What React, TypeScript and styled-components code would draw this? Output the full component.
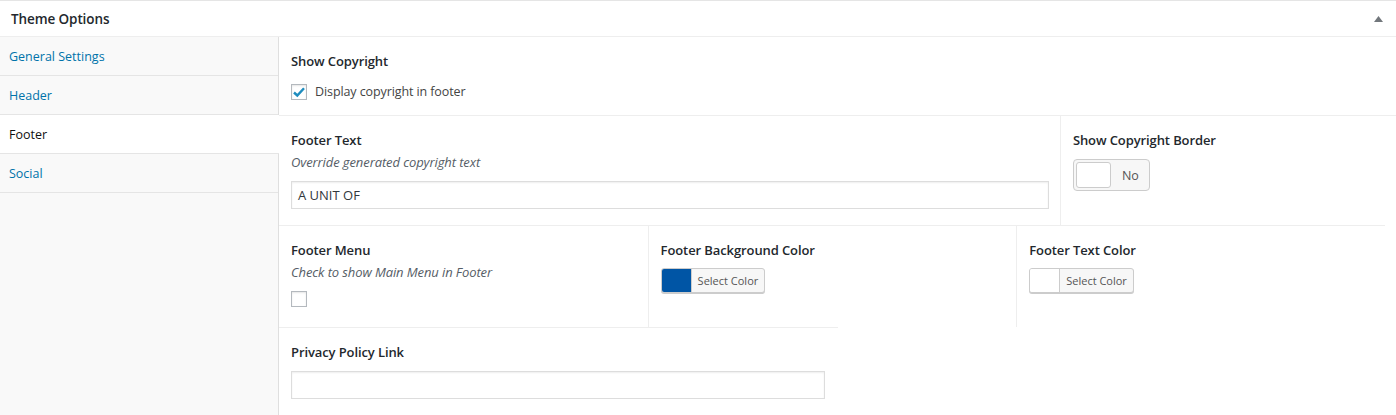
import React from "react";
import styled, { createGlobalStyle } from "styled-components";

const Global = createGlobalStyle`
  html, body { margin: 0; padding: 0; background: #fff; }
  body { font-family: "Segoe UI", "Open Sans", "Noto Sans", sans-serif; font-size: 13px; color: #444; }
  * { box-sizing: border-box; }
`;

const Box = styled.div`
  width: 1396px;
  border-top: 1px solid #e5e5e5;
  background: #fff;
`;

const Head = styled.div`
  height: 36px;
  display: flex;
  align-items: center;
  justify-content: space-between;
  padding: 0 13px 0 11px;
  border-bottom: 1px solid #eeeeee;
`;

const Title = styled.h2`
  margin: 0;
  font-size: 13.5px;
  font-weight: 600;
  color: #23282d;
  letter-spacing: -0.1px;
`;

const Body = styled.div`
  display: flex;
  min-height: 378px;
`;

const Side = styled.ul`
  list-style: none;
  margin: 0;
  padding: 0;
  width: 279px;
  flex: none;
  background: #f9f9f9;
  border-right: 1px solid #dfdfdf;
`;

const Tab = styled.li<{ $active?: boolean }>`
  height: 39px;
  display: flex;
  align-items: center;
  padding-left: 9px;
  border-bottom: 1px solid #e5e5e5;
  font-size: 12.5px;
  color: ${(p) => (p.$active ? "#111" : "#0073aa")};
  background: ${(p) => (p.$active ? "#fff" : "transparent")};
  margin-right: ${(p) => (p.$active ? "-1px" : "0")};
`;

const Grid = styled.div`
  flex: 1;
  display: flex;
  flex-wrap: wrap;
  align-content: flex-start;
`;

const Cell = styled.div<{ $w: string; $h: number; $first?: boolean; $right?: boolean; $left?: boolean }>`
  width: ${(p) => p.$w};
  height: ${(p) => p.$h}px;
  padding: 13px 12px 0 12px;
  border-top: ${(p) => (p.$first ? "none" : "1px solid #eeeeee")};
  border-right: ${(p) => (p.$right ? "1px solid #eeeeee" : "none")};
  border-left: ${(p) => (p.$left ? "1px solid #eeeeee" : "none")};
`;

const Label = styled.div`
  font-size: 13px;
  font-weight: 600;
  color: #23282d;
  line-height: 22px;
  letter-spacing: -0.1px;
`;

const Desc = styled.div`
  font-size: 13px;
  font-style: italic;
  color: #555d66;
  line-height: 22px;
  margin-bottom: 8px;
  letter-spacing: -0.1px;
`;

const CheckRow = styled.label`
  display: flex;
  align-items: center;
  gap: 8px;
  margin-top: 11px;
  font-size: 12.5px;
  color: #444;
  letter-spacing: -0.1px;
`;

const Check = styled.span<{ $mt?: number }>`
  width: 16px;
  height: 16px;
  border: 1px solid #b4b9be;
  box-shadow: inset 0 1px 2px rgba(0, 0, 0, 0.1);
  background: #fff;
  display: flex;
  align-items: center;
  justify-content: center;
  margin-top: ${(p) => p.$mt ?? 0}px;
  flex: none;
`;

const Input = styled.div<{ $w: number; $mt?: number }>`
  width: ${(p) => p.$w}px;
  height: 28px;
  margin-top: ${(p) => p.$mt ?? 0}px;
  border: 1px solid #ddd;
  box-shadow: inset 0 1px 2px rgba(0, 0, 0, 0.07);
  display: flex;
  align-items: center;
  padding: 0 6px;
  font-size: 13px;
  color: #32373c;
`;

const Toggle = styled.div`
  margin-top: 8px;
  width: 77px;
  height: 32px;
  border: 1px solid #cccccc;
  border-radius: 4px;
  background: #f7f7f7;
  display: flex;
  align-items: center;
  padding: 2px;
  gap: 11px;
  font-size: 12.5px;
  color: #555;
`;

const Knob = styled.span`
  width: 35px;
  height: 26px;
  background: #fff;
  border: 1px solid #cccccc;
  border-radius: 3px;
`;

const Picker = styled.div`
  margin-top: 7px;
  display: inline-flex;
  height: 25px;
  border: 1px solid #cccccc;
  border-radius: 3px;
  box-shadow: 0 1px 0 #cccccc;
  overflow: hidden;
  background: #f7f7f7;
`;

const Swatch = styled.span<{ $c: string }>`
  width: 30px;
  background: ${(p) => p.$c};
  border-right: 1px solid #cccccc;
`;

const PickLabel = styled.span`
  padding: 0 6px;
  font-size: 11px;
  line-height: 23px;
  color: #555;
`;

const Arrow = () => (
  <svg width="9" height="6" viewBox="0 0 9 6">
    <path d="M4.5 0 L9 6 L0 6 Z" fill="#72777c" />
  </svg>
);

const Tick = () => (
  <svg width="14" height="12" viewBox="0 0 14 12">
    <path d="M2 6.5 L5.3 9.5 L12 2.2" stroke="#1e8cbe" strokeWidth="2.4" fill="none" />
  </svg>
);

export default function App() {
  return (
    <>
      <Global />
      <Box>
        <Head>
          <Title>Theme Options</Title>
          <Arrow />
        </Head>
        <Body>
          <Side>
            <Tab>General Settings</Tab>
            <Tab>Header</Tab>
            <Tab $active>Footer</Tab>
            <Tab>Social</Tab>
          </Side>
          <Grid>
            <Cell $w="100%" $h={78} $first>
              <Label>Show Copyright</Label>
              <CheckRow>
                <Check>
                  <Tick />
                </Check>
                Display copyright in footer
              </CheckRow>
            </Cell>
            <Cell $w="70%" $h={110} $right>
              <Label>Footer Text</Label>
              <Desc>Override generated copyright text</Desc>
              <Input $w={758}>A UNIT OF</Input>
            </Cell>
            <Cell $w="30%" $h={110}>
              <Label>Show Copyright Border</Label>
              <Toggle>
                <Knob />
                No
              </Toggle>
            </Cell>
            <Cell $w="33%" $h={102}>
              <Label>Footer Menu</Label>
              <Desc>Check to show Main Menu in Footer</Desc>
              <Check $mt={2} />
            </Cell>
            <Cell $w="33%" $h={102} $left>
              <Label>Footer Background Color</Label>
              <Picker>
                <Swatch $c="#0055a5" />
                <PickLabel>Select Color</PickLabel>
              </Picker>
            </Cell>
            <Cell $w="33%" $h={102} $left>
              <Label>Footer Text Color</Label>
              <Picker>
                <Swatch $c="#ffffff" />
                <PickLabel>Select Color</PickLabel>
              </Picker>
            </Cell>
            <Cell $w="50%" $h={90}>
              <Label>Privacy Policy Link</Label>
              <Input $w={534} $mt={8} />
            </Cell>
          </Grid>
        </Body>
      </Box>
    </>
  );
}
